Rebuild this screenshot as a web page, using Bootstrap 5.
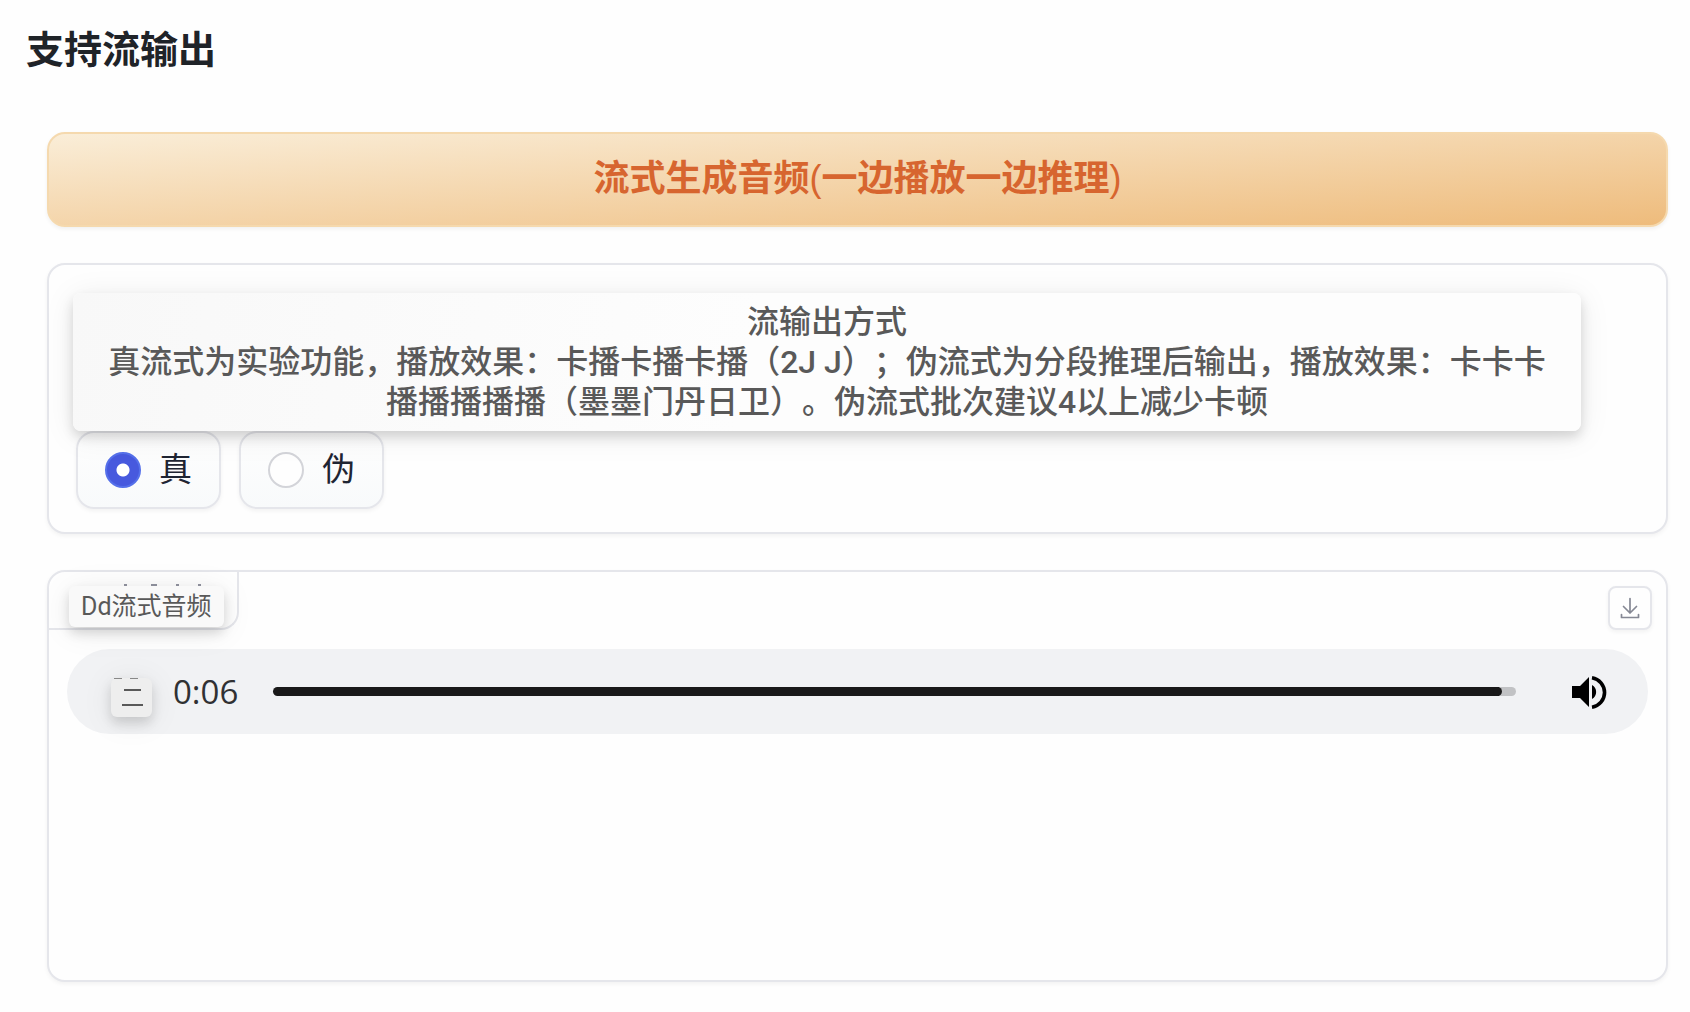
<!DOCTYPE html>
<html lang="zh-CN">
<head>
<meta charset="utf-8">
<meta name="viewport" content="width=device-width, initial-scale=1">
<title>支持流输出</title>
<link href="https://cdn.jsdelivr.net/npm/bootstrap@5.3.0/dist/css/bootstrap.min.css" rel="stylesheet">
<style>
  body { background: #fefefe; color: #1f2328; font-family: Roboto, "Noto Sans CJK SC", sans-serif; text-spacing-trim: space-all; }
  .page { padding: 22px 22px 30px 26px; }
  .page-title { font-size: 38px; line-height: 56px; font-weight: 700; margin-bottom: 54px; }
  .stack { margin-left: 21px; gap: 36px; }
  .btn-generate {
    height: 95px; padding: 0 16px 2px; border: 2px solid #f5d9ae; border-radius: 18px;
    background: linear-gradient(to bottom right, #faeed9, #eebb7b) border-box;
    color: #d7652f; font-size: 36px; line-height: 52px; font-weight: 700;
    box-shadow: 0 2px 4px rgba(0, 0, 0, .06);
  }
  .btn-generate:hover { color: #c2571f; }
  .paren { font-family: "Liberation Sans", sans-serif; font-weight: 400; }
  .panel { border: 2px solid #e5e6eb; border-radius: 18px; background: #fefefe; box-shadow: 0 2px 4px rgba(0, 0, 0, .05); }
  .mode-panel { padding: 28px 24px 23px; }
  .floating { color: #595959; box-shadow: 0 6px 12px rgba(0, 0, 0, .14), 0 4px 32px rgba(0, 0, 0, .08); }
  .mode-note {
    margin-right: 61px; padding: 9px 24px 9px; border-radius: 8px;
    background: linear-gradient(100deg, #f8f8f8, #fdfdfd 45%);
    font-size: 32px; line-height: 40px; font-weight: 500;
  }
  .choices { gap: 18px; padding-left: 3px; }
  .choice {
    height: 78px; padding: 0 27px; gap: 18px; border: 2px solid #e5e6eb; border-radius: 18px;
    background: linear-gradient(#fefefe, #f8fafb); color: #1f2533; font-size: 33px; line-height: 44px;
    box-shadow: 0 2px 4px rgba(0, 0, 0, .05); cursor: pointer;
  }
  .choice .form-check-input { width: 36px; height: 36px; margin: 0; border: 2px solid #d3d4d9; background-color: #fefefe; }
  .choice .form-check-input:checked {
    border-color: #5570ea; background-color: #4759de;
    background-image: radial-gradient(circle, #fff 6px, transparent 7px);
  }
  .audio-panel { min-height: 412px; }
  .audio-tab { width: 190px; height: 58px; padding: 0 0 1px 20px; border: solid #e5e6eb; border-width: 0 2px 2px 0; border-radius: 0 0 18px 0; }
  .audio-name { padding: 0 12px; border-radius: 6px; background: #f9f9f9; font-size: 25px; line-height: 41px; }
  .tab-marks { left: 64px; top: 12px; }
  .btn-download { width: 44px; height: 44px; margin: 14px 14px 0 0; border: 2px solid #e5e6eb; border-radius: 8px; background: #fefefe; color: #858894; box-shadow: 0 2px 4px rgba(0, 0, 0, .05); }
  .player { height: 85px; margin: 19px 18px 0; padding: 0 38px 0 44px; border-radius: 43px; background: #f1f2f4; }
  .btn-pause { width: 41px; height: 39px; margin-top: 12px; border: 0; border-radius: 6px; background: #eee; }
  .elapsed { width: 121px; padding-left: 21px; color: #303133; font-family: "Open Sans", sans-serif; font-size: 33px; line-height: 44px; }
  .seek { appearance: none; height: 9px; min-width: 0; margin: 0 52px 0 0; border-radius: 5px; background: linear-gradient(to right, #191919 98.6%, #c1c2c4 98.6%); }
  .seek::-webkit-slider-thumb { appearance: none; width: 9px; height: 9px; border-radius: 50%; background: #191919; }
  .btn-volume { border: 0; background: transparent; color: #000; width: 42px; height: 42px; }
</style>
</head>
<body>
<main class="page">
  <h1 class="page-title">支持流输出</h1>
  <div class="stack d-flex flex-column">
    <button type="button" class="btn btn-generate w-100">流式生成音频<span class="paren">(</span>一边播放一边推理<span class="paren">)</span></button>

    <section class="panel mode-panel" role="radiogroup" aria-labelledby="modeNote">
      <div id="modeNote" class="mode-note floating position-relative z-1 text-center">流输出方式<br>真流式为实验功能，播放效果：卡播卡播卡播（2J J）；伪流式为分段推理后输出，播放效果：卡卡卡<br>播播播播播（墨墨门丹日卫）。伪流式批次建议4以上减少卡顿</div>
      <div class="choices d-flex">
        <label class="choice d-flex align-items-center" for="modeReal"><input class="form-check-input" type="radio" name="mode" id="modeReal" checked>真</label>
        <label class="choice d-flex align-items-center" for="modePseudo"><input class="form-check-input" type="radio" name="mode" id="modePseudo">伪</label>
      </div>
    </section>

    <section class="panel audio-panel">
      <div class="d-flex justify-content-between align-items-start">
        <div class="audio-tab position-relative d-flex align-items-end">
          <svg class="tab-marks position-absolute" width="100" height="2" aria-hidden="true"><path d="M11 1h3M38 1h6M63 1h3M85 1h3" stroke="#8b8d99" stroke-width="2"/></svg>
          <span class="audio-name floating">Dd流式音频</span>
        </div>
        <button type="button" class="btn btn-download p-0 d-flex align-items-center justify-content-center" aria-label="下载">
          <svg width="20" height="22" viewBox="0 0 20 22" fill="none" stroke="currentColor" stroke-width="1.7" stroke-linecap="round" stroke-linejoin="round" aria-hidden="true"><path d="M10 1.500v14.500M3.500 9.500l6.500 6.500 6.500-6.500M1.500 17.500v3h17v-3"/></svg>
        </button>
      </div>
      <div class="player d-flex align-items-center">
        <button type="button" class="btn-pause floating p-0 flex-shrink-0" aria-label="暂停">
          <svg class="d-block" width="41" height="39" viewBox="0 0 41 39" aria-hidden="true"><path d="M3 0h8v1h-8zM19 0h8v1h-8z" fill="#888"/><path d="M13 11h17v2h-17zM11 26h21v2h-21z" fill="#595959"/></svg>
        </button>
        <span class="elapsed flex-shrink-0">0:06</span>
        <input type="range" class="seek flex-grow-1" min="0" max="1000" value="989" aria-label="播放进度">
        <button type="button" class="btn-volume p-0 flex-shrink-0" aria-label="音量">
          <svg class="d-block" width="42" height="42" viewBox="0 0 42 42" fill="currentColor" aria-hidden="true"><path d="M4 15v12h8l9 9v-30l-9 9zM24 14v14a8 8 0 0 0 0-14z"/><path d="M24 6.700a15 15 0 0 1 0 29.600" fill="none" stroke="currentColor" stroke-width="3.600"/></svg>
        </button>
      </div>
    </section>
  </div>
</main>
<script src="https://cdn.jsdelivr.net/npm/bootstrap@5.3.0/dist/js/bootstrap.bundle.min.js"></script>
</body>
</html>
